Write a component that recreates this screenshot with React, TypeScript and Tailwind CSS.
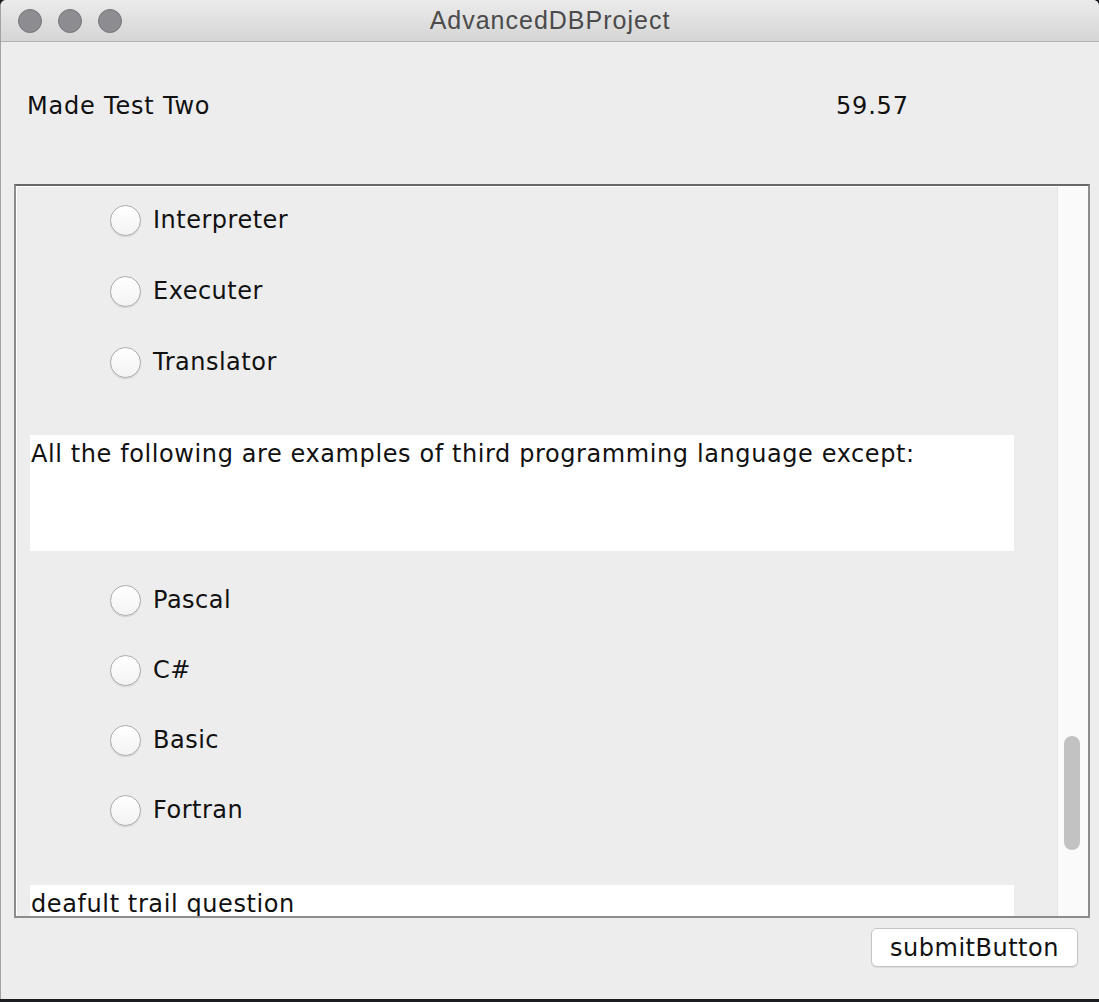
const font = "font-['DejaVu_Sans','Noto_Sans',sans-serif]";

function Radio({ label }: { label: string }) {
  return (
    <div className="flex h-[70px] items-center pl-[93px]">
      <span className="h-[31px] w-[31px] shrink-0 rounded-full border border-[#acacac] bg-gradient-to-b from-white to-[#f3f3f3] shadow-[0_1px_1px_rgba(0,0,0,0.12)]" />
      <span className="ml-[12px] text-[24px] leading-none tracking-[0.5px] text-[#111]">{label}</span>
    </div>
  );
}

function Question({ text }: { text: string }) {
  return (
    <div className="ml-[13px] mr-[43px] h-[116px] bg-white pl-px text-[24px] leading-[38px] tracking-[0.6px] text-[#111]">
      {text}
    </div>
  );
}

export default function App() {
  return (
    <div className={`${font} h-[1002px] w-[1099px] overflow-hidden bg-[#1c1d20]`}>
      <div className="flex h-[999px] flex-col overflow-hidden rounded-t-[6px] border-l border-[#a2a2a2] bg-[#ededed]">
        {/* title bar */}
        <div className="relative flex h-[42px] shrink-0 items-center border-b border-[#b3b3b3] bg-gradient-to-b from-[#ebebeb] to-[#d5d5d5] pl-[17px]">
          <div className="flex gap-[16px]">
            <span className="h-[24px] w-[24px] rounded-full border border-[#77767b] bg-[#8d8c90]" />
            <span className="h-[24px] w-[24px] rounded-full border border-[#77767b] bg-[#8d8c90]" />
            <span className="h-[24px] w-[24px] rounded-full border border-[#77767b] bg-[#8d8c90]" />
          </div>
          <div className="absolute inset-0 flex items-center justify-center font-['Liberation_Sans',Arial,sans-serif] text-[25px] tracking-[1px] text-[#4b4b4b]">
            AdvancedDBProject
          </div>
        </div>

        {/* header */}
        <div className="flex h-[142px] shrink-0 items-start pt-[49px] text-[24px] leading-[30px] tracking-[0.8px] text-[#111]">
          <span className="ml-[26px] w-[809px]">Made Test Two</span>
          <span>59.57</span>
        </div>

        {/* scroll pane */}
        <div className="ml-[13px] mr-[9px] flex h-[734px] border-2 border-[#8c8c8c] border-t-[#686868]">
          <div className="flex min-w-0 flex-1 border-l border-t border-white">
            <div className="min-w-0 flex-1 overflow-hidden">
              <div className="-mt-[2px]">
                <div className="h-[71px]"><Radio label="Interpreter" /></div>
                <div className="h-[71px]"><Radio label="Executer" /></div>
                <div className="h-[71px]"><Radio label="Translator" /></div>
                <div className="h-[37px]" />
                <Question text="All the following are examples of third programming language except:" />
                <div className="h-[14px]" />
                <Radio label="Pascal" />
                <Radio label="C#" />
                <Radio label="Basic" />
                <Radio label="Fortran" />
                <div className="h-[40px]" />
                <Question text="deafult trail question" />
              </div>
            </div>
            <div className="w-[31px] shrink-0 border-l border-[#e4e4e4] bg-[#fafafa] pr-[3px]">
              <div className="ml-[6px] mt-[549px] h-[114px] w-[16px] rounded-full bg-[#c2c2c2]" />
            </div>
          </div>
        </div>

        {/* footer */}
        <div className="flex justify-end pr-[21px] pt-[10px]">
          <button className="h-[39px] w-[207px] rounded-[6px] border border-[#c4c4c4] bg-white text-[24px] leading-none tracking-[0.5px] text-[#111] shadow-[0_1px_1px_rgba(0,0,0,0.08)]">
            submitButton
          </button>
        </div>
      </div>
    </div>
  );
}
